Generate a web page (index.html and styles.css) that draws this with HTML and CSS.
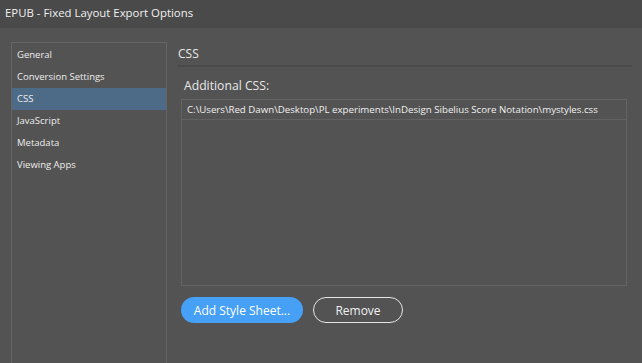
FILE: index.html
```html
<!DOCTYPE html>
<html lang="en">
<head>
    <meta charset="UTF-8">
    <title>EPUB - Fixed Layout Export Options</title>
    <link rel="stylesheet" href="styles.css">
</head>
<body>
    <div id="title-bar">EPUB - Fixed Layout Export Options</div>
    <div id="dialog">
        <ul id="sections">
            <li>General</li>
            <li>Conversion Settings</li>
            <li class="selected">CSS</li>
            <li>JavaScript</li>
            <li>Metadata</li>
            <li>Viewing Apps</li>
        </ul>
        <div id="panel">
            <div class="panel-title">CSS</div>
            <div class="panel-body">
                <div class="label">Additional CSS:</div>
                <div id="css-list">
                    <div class="css-row">C:\Users\Red Dawn\Desktop\PL experiments\InDesign Sibelius Score Notation\mystyles.css</div>
                </div>
                <div class="buttons">
                    <button class="btn primary">Add Style Sheet...</button>
                    <button class="btn outline">Remove</button>
                </div>
            </div>
        </div>
    </div>
</body>
</html>
```

FILE: styles.css
```css
body {
    font-family: "Open Sans", "Noto Sans", sans-serif;
    background-color: #535353;
    color: #e8e8e8;
    margin: 0;
    padding: 0;
    height: 100vh;
    overflow: hidden;
    display: flex;
    flex-direction: column;
}
#title-bar {
    height: 28px;
    line-height: 26px;
    padding-left: 5px;
    font-size: 11.4px;
    color: #f0f0f0;
    background-color: #4a4a4a;
    flex-shrink: 0;
}
#dialog {
    flex: 1;
    display: flex;
    padding: 14px 0 0 11px;
    min-height: 0;
}
#sections {
    list-style: none;
    margin: 0;
    padding: 1px 0 0 0;
    width: 154px;
    border: 1px solid #656565;
    border-bottom: none;
    flex-shrink: 0;
}
#sections li {
    height: 22px;
    line-height: 22px;
    padding-left: 5px;
    font-size: 9.5px;
    color: #ededed;
}
#sections li.selected {
    background-color: #4d6a87;
}
#panel {
    flex: 1;
    padding: 2px 12px 0 10px;
}
.panel-title {
    font-size: 12px;
    height: 21px;
    line-height: 20px;
    padding-left: 1px;
    border-bottom: 2px solid #4a4a4a;
    margin-right: -2px;
}
.panel-body {
    padding: 11px 3px 0 4px;
}
.label {
    font-size: 12.2px;
    line-height: 16px;
    padding-left: 3px;
    margin-bottom: 5px;
}
#css-list {
    height: 185px;
    border: 1px solid #646464;
}
.css-row {
    height: 19px;
    line-height: 19px;
    padding-left: 5px;
    font-size: 9.7px;
    color: #f0f0f0;
    border-bottom: 1px solid #626262;
    white-space: nowrap;
}
.buttons {
    display: flex;
    gap: 10px;
    margin-top: 11px;
    padding-left: 0;
}
.btn {
    font-family: "Open Sans", "Noto Sans", sans-serif;
    font-size: 12px;
    height: 26px;
    border-radius: 13px;
    padding: 0;
    cursor: pointer;
}
.primary {
    width: 122px;
    background-color: #46a0f5;
    color: #ffffff;
    border: none;
}
.outline {
    width: 90px;
    background: none;
    color: #f0f0f0;
    border: 1px solid #e6e6e6;
}
```
